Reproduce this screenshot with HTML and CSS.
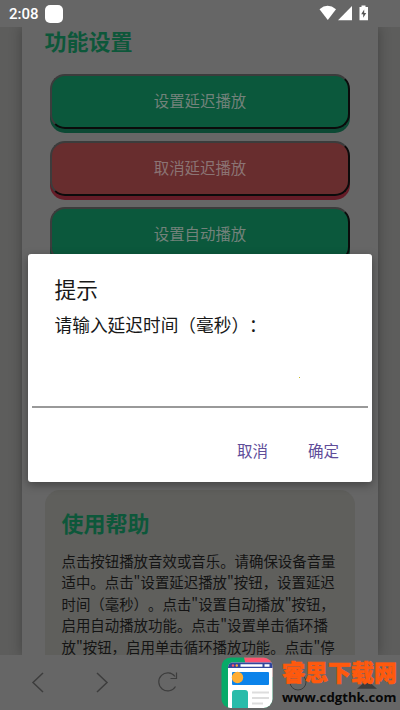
FILE: index.html
```html
<!DOCTYPE html>
<html lang="zh-CN">
<head>
<meta charset="utf-8">
<title>功能设置</title>
<link rel="stylesheet" href="styles.css">
</head>
<body>
<div class="screen">
  <header class="status">
    <span class="clock">2:08</span><span class="notice"></span>
    <svg class="status-icons" width="50" height="16" viewBox="0 0 50 16" fill="#fff">
      <path d="M.5 4.200Q8.500-2.500 17 4.200L8.800 15z"/>
      <path d="M19 15.200L33 1v14.200z"/>
      <path d="M40.500 2h2V.5h4V2h2.500v13.200h-8.500z"/>
      <path d="M45.200 4.500l-3 4.800h2v3.500l3-4.800h-2z" fill="#555"/>
    </svg>
  </header>
  <main class="page">
    <section class="card">
      <h2 class="heading">功能设置</h2>
      <div class="buttons">
        <button class="btn">设置延迟播放</button>
        <button class="btn btn-red">取消延迟播放</button>
        <button class="btn">设置自动播放</button>
      </div>
      <section class="help">
        <h2 class="help-title">使用帮助</h2>
        <p class="help-text">点击按钮播放音效或音乐。请确保设备音量<br>适中。点击"设置延迟播放"按钮，设置延迟<br>时间（毫秒）。点击"设置自动播放"按钮，<br>启用自动播放功能。点击"设置单击循环播<br>放"按钮，启用单击循环播放功能。点击"停</p>
      </section>
    </section>
  </main>
  <nav class="nav">
    <svg width="400" height="55" viewBox="0 0 400 55" fill="none" stroke="#3d3d3d" stroke-width="1.500">
      <path d="M43 18l-10 9.500L43 37M97 18l10 9.500L97 37"/>
      <path d="M175.500 31.500A9 9 0 1 1 175 21.500M176.500 17.500v6h-6" stroke-width="1.200"/>
      <circle cx="298" cy="27" r="8" stroke-width="1"/>
      <path d="M359 33l8-7 8 7z" fill="#3d3d3d"/>
    </svg>
  </nav>

  <div class="dialog">
    <h1 class="dialog-title">提示</h1>
    <p class="dialog-message">请输入延迟时间（毫秒）：</p>
    <div class="field"><span class="speck"></span></div>
    <div class="actions"><span>取消</span><span>确定</span></div>
  </div>

  <div class="watermark">
    <svg class="logo" width="52" height="52" viewBox="0 0 52 52">
      <defs><clipPath id="tile"><rect x=".5" y=".5" width="51" height="50.500" rx="9"/></clipPath></defs>
      <g clip-path="url(#tile)">
        <rect width="52" height="52" fill="#08aa68"/>
        <path d="M23 0h29v20H27z" fill="#ff5370"/>
        <path d="M7 11q0-5.500 5-5.500h40V52H7z" fill="#fff"/>
        <path d="M7 11q0-5.500 5-5.500h40V11z" fill="#31479d"/>
      </g>
      <circle cx="12" cy="8.500" r="1.200" fill="#ff5370"/><circle cx="15.800" cy="8.500" r="1.200" fill="#ffad32"/>
      <path d="M19.500 8.500h22M43.500 8.500h5" stroke="#fff" stroke-width="2.600"/>
      <rect x="11" y="15" width="37" height="13" rx="1" fill="#0b83ea"/>
      <circle cx="16.500" cy="20.500" r="5.700" fill="#ffad32"/>
      <path d="M11 51V36q0-3 3-3h10q3 0 3 3v15z" fill="#29bcaa"/>
      <path d="M31 35.500h17M31 41h17M31 46.500h11" stroke="#ddd" stroke-width="2"/>
    </svg>
    <div class="brand"><b class="brand-name">睿思下载网</b><b class="brand-url">www.cdgthk.com</b></div>
  </div>
</div>
</body>
</html>
```
FILE: styles.css
```css
* { box-sizing: border-box; margin: 0; }
body { font-family: Roboto, "Noto Sans CJK SC", sans-serif; background: #666; text-spacing-trim: space-all; }
.screen { position: relative; width: 400px; height: 710px; overflow: hidden; display: flex; flex-direction: column; background: #666; }
.status { height: 27px; flex: none; display: flex; align-items: center; padding: 0 31px 0 9px; color: #fff; }
.clock { font-size: 15px; font-weight: 500; line-height: 27px; width: 36px; padding-top: 1px; }
.notice { width: 18px; height: 18px; border-radius: 5px; background: #fff; }
.status-icons { margin-left: auto; margin-top: -2px; }
.page { height: 628px; flex: none; overflow: hidden; padding: 0 22px; background: #5d5d5c; }
.card { height: 628px; padding: 0 23px; background: #666; box-shadow: 0 0 12px rgba(0, 0, 0, .3); display: flex; flex-direction: column; }
.heading, .help-title { font-size: 22px; line-height: 30px; font-weight: 700; color: #0d573a; white-space: nowrap; margin-left: -.5px; }
.heading { flex: none; padding-top: 1px; height: 30px; }
.buttons { flex: none; display: flex; flex-direction: column; gap: 11.500px; padding: 17px 5px 0; height: 433px; }
.btn { flex: none; height: 55px; border: 2px solid; border-color: #3c3c3c #0b0b0b #0b0b0b #3c3c3c; border-radius: 15px; background: #0b583c; box-shadow: 0 4px 0 #0c4934; color: #73827b; font: 400 15.400px/20px Roboto, "Noto Sans CJK SC", sans-serif; padding: 1px 0 0; }
.btn-red { background: #682d2e; box-shadow: 0 4px 0 #641c27; color: #8b7474; }
.help { flex: none; height: 165px; border-radius: 15px 15px 0 0; background: #5f5f5c; padding: 20px 0 0 17px; }
.help-text { font-family: "Noto Sans CJK SC", sans-serif; font-size: 14.430px; line-height: 21.600px; margin: 9.500px 0 0 -.5px; color: #141414; white-space: nowrap; }
.nav { height: 55px; flex: none; background: #666; }
.nav svg { display: block; }
.dialog { position: absolute; left: 28px; top: 254px; width: 344px; height: 228px; border-radius: 3px; background: #fff; box-shadow: 0 3px 10px rgba(0, 0, 0, .35); display: flex; flex-direction: column; padding: 21px 4px 0; color: #181818; }
.dialog-title { font-size: 21.700px; line-height: 32px; font-weight: 400; padding-left: 22.500px; }
.dialog-message { font-size: 17.700px; line-height: 26px; padding-left: 22.500px; margin-top: 6px; white-space: nowrap; }
.field { height: 69px; border-bottom: 2px solid #999; display: flex; align-items: flex-end; padding: 0 0 28px 267px; }
.speck { width: 1px; height: 1px; background: #c9bc20; }
.actions { display: flex; justify-content: flex-end; gap: 40px; padding: 33px 29px 0 0; font-size: 15.500px; line-height: 22px; color: #604d99; }
.watermark { position: absolute; left: 221px; top: 657px; display: flex; }
.logo { flex: none; }
.brand { display: flex; flex-direction: column; padding-left: 9px; white-space: nowrap; }
.brand-name { font-size: 23px; line-height: 28px; font-weight: 900; color: #ff590d; margin-top: 3px; -webkit-text-stroke: .6px #ff590d; }
.brand-url { font: 700 13.200px/16px "Open Sans", sans-serif; color: #070707; margin-top: 1px; }
```
